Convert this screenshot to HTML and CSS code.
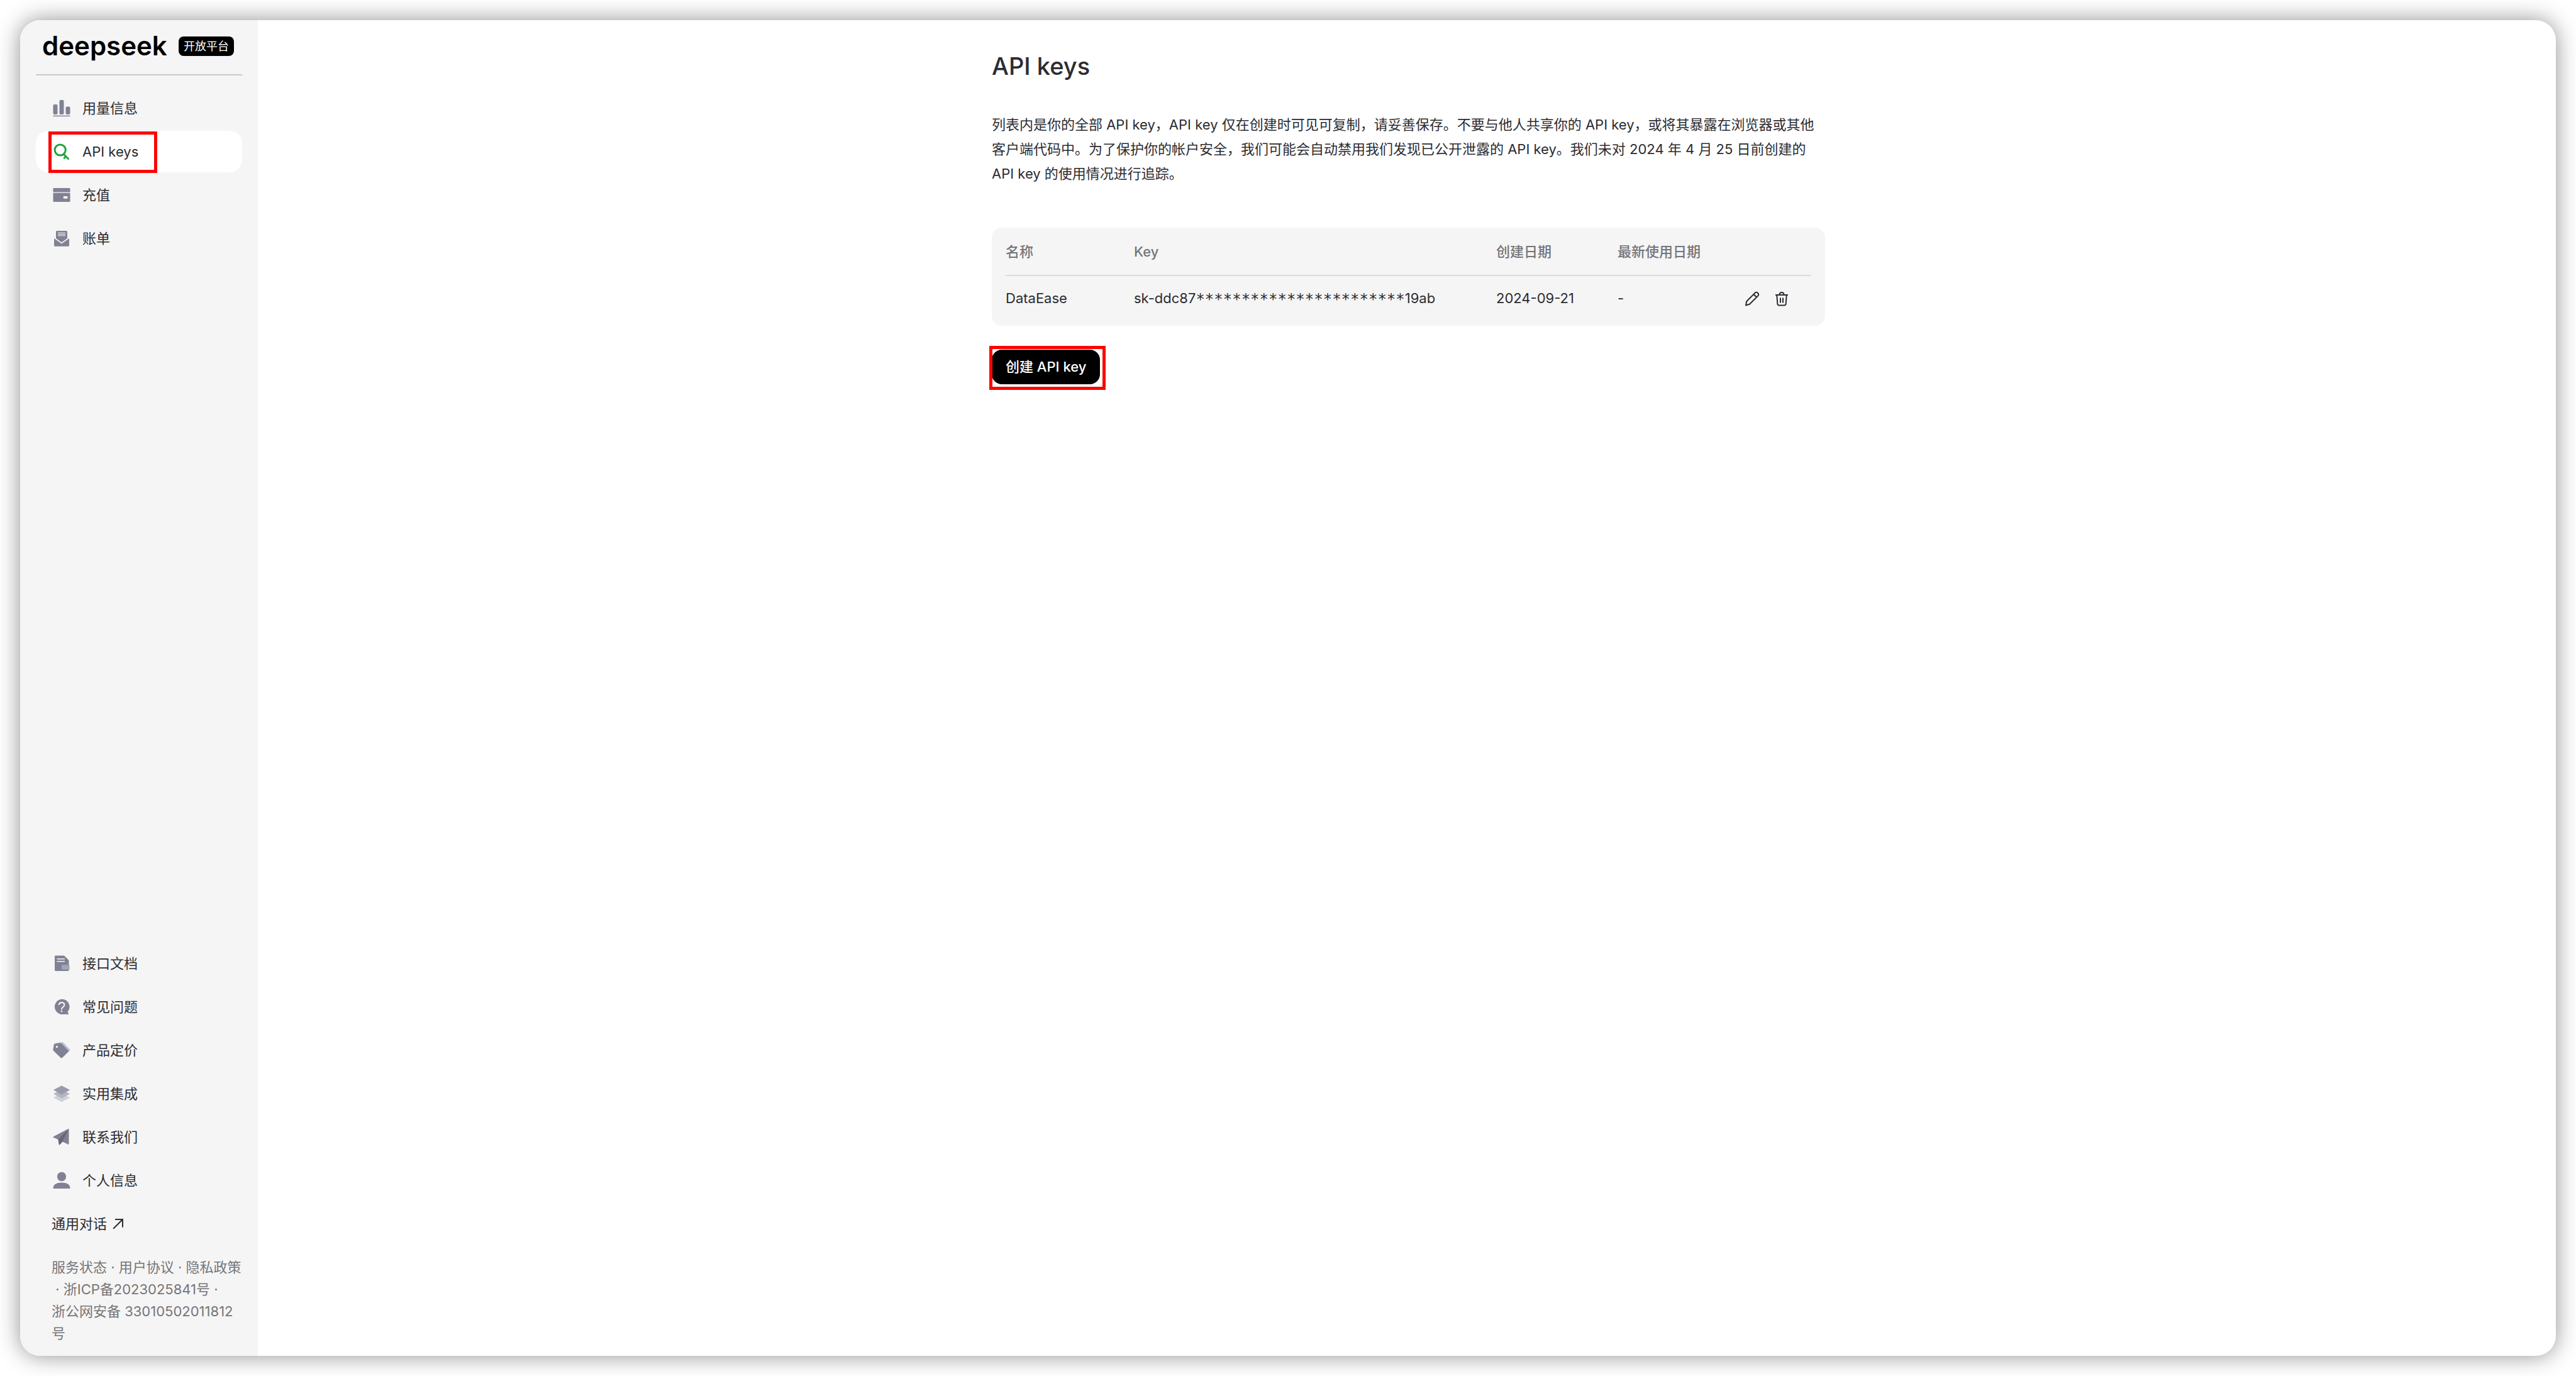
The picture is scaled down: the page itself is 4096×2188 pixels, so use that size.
FILE: index.html
```html
<!DOCTYPE html>
<html lang="zh-CN">
<head>
<meta charset="utf-8">
<title>API keys</title>
<link rel="stylesheet" href="styles.css">
</head>
<body>
<div class="window">
  <aside class="sidebar">
    <header class="brand">
      <span class="brand-name">deepseek</span>
      <span class="brand-badge">开放平台</span>
    </header>
    <nav class="nav">
      <a class="nav-item" href="#usage">
        <svg class="icon" viewBox="0 0 28 28"><rect x="0.500" y="8" width="7" height="16" rx="2"/><rect x="10.500" y="1" width="7" height="23" rx="2"/><rect x="20.500" y="11.500" width="7" height="12.500" rx="2"/><rect x="0.500" y="25.700" width="27" height="1.500"/></svg>
        用量信息
      </a>
      <a class="nav-item active" href="#keys">
        <svg class="icon key" viewBox="0 0 28 28"><circle cx="11.700" cy="11.500" r="8.600" stroke-width="3"/><path d="M17 18l7.500 7.500M20.500 22l-2.300 2.300" stroke-width="3" stroke-linecap="round"/></svg>
        API keys
        <span class="mark mark-nav"></span>
      </a>
      <a class="nav-item" href="#topup">
        <svg class="icon" viewBox="0 0 28 28"><path d="M1.500 3h25q1 0 1 1v5.500h-27V4q0-1 1-1z"/><path fill-rule="evenodd" d="M.5 10.700h27v13q0 1.200-1 1.200h-25q-1 0-1-1.200zM17.500 16q-.7 0-.7.7v2.300q0 .7.7.7h5.300q.7 0 .7-.7v-2.300q0-.7-.7-.7z"/></svg>
        充值
      </a>
      <a class="nav-item" href="#bills">
        <svg class="icon" viewBox="0 0 28 28"><path fill-rule="evenodd" d="M6.500 2h15q1.500 0 1.500 1.500V14l-9 6.500L5 14V3.500Q5 2 6.500 2zM8 4.700v1.100h12V4.700zM8 7v1.100h12V7zM8 9.200v1.100h12V9.200z"/><path d="M2 14l12 8.500L26 14v11.500q0 1.200-1.200 1.200H3.200Q2 26.700 2 25.500z"/></svg>
        账单
      </a>
    </nav>
    <nav class="nav nav-bottom">
      <a class="nav-item" href="#docs">
        <svg class="icon" viewBox="0 0 28 28"><path fill-rule="evenodd" d="M4 1.500h14l7.500 7.500v15.500q0 1.500-1.500 1.500H4.500Q3 26 3 24.500v-21.500Q3 1.500 4 1.500zM6.500 6v1.400h12.500V6zM6.500 10v1.400h12.500V10z"/><rect x="14" y="16.300" width="12.500" height="7.400" rx="1" fill="#a3a5b4"/></svg>
        接口文档
      </a>
      <a class="nav-item" href="#faq">
        <svg class="icon" viewBox="0 0 28 28"><path d="M14 1.700a12.200 12.200 0 1 0 4 24l7.300.3-1.700-4.200A12.200 12.200 0 0 0 14 1.700z"/><path d="M9.800 10.300q.7-3.300 4.300-3.300 4.300.2 4.300 3.800 0 2-2.400 3.500-2 1.300-2 3.500" fill="none" stroke="#f5f5f5" stroke-width="2" stroke-linecap="round"/><circle cx="14" cy="21" r="1.300" fill="#f5f5f5"/></svg>
        常见问题
      </a>
      <a class="nav-item" href="#pricing">
        <svg class="icon" viewBox="0 0 28 28"><path d="M5 2.500L14.500 1q1.500 0 2.500 1l10 10.500q1 1 0 2L15.500 26z" fill="#bcbfd0"/><path fill-rule="evenodd" d="M3 3.600L11.500 2.700q1.500-.1 2.500.9l10.600 11q.8.8 0 1.600L14.500 26q-1 1-2 0L1 14.700q-.7-.7-.6-1.700L1.700 5q.2-1.200 1.300-1.400zM6.500 6.700a1.700 1.700 0 1 0 .01 0z"/></svg>
        产品定价
      </a>
      <a class="nav-item" href="#integrations">
        <svg class="icon" viewBox="0 0 28 28"><path d="M14 13.500l12.500 6.500q.5.400 0 .8L14 27.200 1.500 20.800q-.5-.4 0-.8z" fill="#cfd0da"/><path d="M14 7.500L26.500 14q.5.400 0 .8L14 21.200 1.500 14.800q-.5-.4 0-.8z" fill="#b3b5c3"/><path d="M14 1.300L26.500 7.700q.5.400 0 .8L14 15.500 1.500 8.500q-.5-.4 0-.8z" fill="#9a9ba9"/></svg>
        实用集成
      </a>
      <a class="nav-item" href="#contact">
        <svg class="icon" viewBox="0 0 28 28"><path d="M24.500.9q1-.3 1 .7v23.600q0 1-1 .6L15.500 21.500 11 26.200q-1 .6-1.200-.5L8.500 18 1 14.800q-1.200-.7 0-1.500z"/><path d="M25 1.300L15 21.500l-4.200 4.800q-.8.400-1-.6L8.500 18z" fill="#666876"/></svg>
        联系我们
      </a>
      <a class="nav-item" href="#profile">
        <svg class="icon" viewBox="0 0 28 28"><rect x="7" y="0.800" width="14" height="14.400" rx="6.600"/><path d="M.5 26q.6-8.500 13.500-8.500T27.500 26q0 1-1 1h-25q-1 0-1-1z"/></svg>
        个人信息
      </a>
    </nav>
    <a class="chat-link" href="#chat">通用对话
      <svg class="arrow" viewBox="0 0 18 18"><path d="M1.200 16.800L16 2M4 2h12v12.500"/></svg>
    </a>
    <footer class="legal">
      <div class="legal-line"><a href="#status">服务状态</a> · <a href="#terms">用户协议</a> · <a href="#privacy">隐私政策</a></div>
      <div class="legal-line"> · <a href="#icp">浙ICP备2023025841号</a> · </div>
      <div class="legal-line"><a href="#police">浙公网安备 33010502011812<br>号</a></div>
    </footer>
  </aside>
  <main class="main">
    <div class="content">
      <h1 class="title">API keys</h1>
      <p class="intro">列表内是你的全部 API key，API key 仅在创建时可见可复制，请妥善保存。不要与他人共享你的 API key，或将其暴露在浏览器或其他客户端代码中。为了保护你的帐户安全，我们可能会自动禁用我们发现已公开泄露的 API key。我们未对 2024 年 4 月 25 日前创建的 API key 的使用情况进行追踪。</p>
      <div class="card">
        <table class="keys">
          <colgroup><col class="c-name"><col class="c-key"><col class="c-date"><col class="c-last"><col class="c-actions"></colgroup>
          <thead>
            <tr><th>名称</th><th>Key</th><th>创建日期</th><th>最新使用日期</th><th></th></tr>
          </thead>
          <tbody>
            <tr>
              <td>DataEase</td>
              <td>sk-ddc87<span class="masked">***********************</span>19ab</td>
              <td>2024-09-21</td>
              <td>-</td>
              <td>
                <div class="actions">
                  <button class="icon-button" type="button" aria-label="编辑"><svg class="action-icon" viewBox="0 0 24 24"><path d="M2 22.500l1.200-6.300L16.700 2.600q2-1.800 4.300.3 2.200 2.400.3 4.500L7.800 20.800zM14.500 5l4.500 4.500"/></svg></button>
                  <button class="icon-button" type="button" aria-label="删除"><svg class="action-icon" viewBox="0 0 24 24"><path d="M2 6h20M8.500 6q0-4 3.500-4t3.500 4M4.300 6l1 14q.2 2.500 2.700 2.500h8q2.500 0 2.700-2.500l1-14M10 10.500v8M14 10.500v8"/></svg></button>
                </div>
              </td>
            </tr>
          </tbody>
        </table>
      </div>
      <div class="create">
        <button class="create-button" type="button">创建 API key</button>
        <span class="mark mark-create"></span>
      </div>
    </div>
  </main>
</div>
</body>
</html>
```

FILE: styles.css
```css
* { box-sizing: border-box; }

body {
  margin: 0;
  padding: 32px;
  min-height: 100vh;
  display: flex;
  background: #fff;
  color: #2c2c31;
  font: 22px/35px Inter, "Noto Sans CJK SC", sans-serif;
}

a { color: inherit; text-decoration: none; }

.window {
  flex: 1;
  display: flex;
  border-radius: 32px;
  background: #fff;
  box-shadow: 0 0 36px rgba(0, 0, 0, 0.44);
}

.sidebar {
  width: 378px;
  flex: none;
  display: flex;
  flex-direction: column;
  padding: 22px 25px 18px;
  border-radius: 32px 0 0 32px;
  background: #f5f5f5;
}

.brand {
  display: flex;
  align-items: center;
  justify-content: space-between;
  height: 66px;
  padding: 0 13px 26px 10px;
  border-bottom: 2px solid #cacaca;
}

.brand-name {
  color: #000;
  font-size: 42px;
  font-weight: 600;
  line-height: 38px;
}

.brand-badge {
  padding: 0 8px;
  border-radius: 8px;
  background: #000;
  color: #fff;
  font-size: 18px;
  line-height: 31px;
}

.nav {
  display: flex;
  flex-direction: column;
  gap: 3px;
  padding-top: 19px;
}

.nav-bottom { margin-top: auto; padding-top: 0; }

.nav-item {
  position: relative;
  display: flex;
  align-items: center;
  gap: 19px;
  height: 66px;
  padding-left: 27px;
  border-radius: 20px;
}

.nav-item.active { background: #fff; }

.icon { width: 28px; height: 28px; fill: #808294; }
.icon.key { fill: none; stroke: #1fa43c; }

.mark { position: absolute; border: 5px solid #f00; pointer-events: none; }
.mark-nav { left: 20px; top: 1px; width: 173px; height: 66px; }
.mark-create { inset: -6px -9px -9px -4px; }

.chat-link {
  display: flex;
  align-items: center;
  gap: 9px;
  height: 66px;
  margin-top: 3px;
  padding-left: 25px;
}

.arrow { width: 18px; height: 18px; fill: none; stroke: #2c2c31; stroke-width: 2; }

.legal {
  margin-top: 19px;
  padding-left: 25px;
  color: #757579;
}

.legal-line { white-space: pre; }

.main { flex: 1; padding: 47px 0 0 5px; }

.content { width: 1325px; margin: 0 auto; }

.title {
  margin: 0;
  font-size: 38px;
  font-weight: 500;
  line-height: 52px;
}

.intro { margin: 48px 0 66px; line-height: 39px; }

.card {
  padding: 2px 22px 8px;
  border-radius: 16px;
  background: #f5f5f5;
}

.keys { width: 100%; border-collapse: collapse; table-layout: fixed; }
.keys th, .keys td { padding: 0; text-align: left; }
.keys th { height: 74px; border-bottom: 2px solid #dbdbdb; color: #757579; font-weight: 500; }
.keys td { height: 72px; }

.c-name { width: 204px; }
.c-key { width: 576px; }
.c-date { width: 193px; }
.c-last { width: 202px; }

.masked {
  font-family: "DejaVu Sans Mono", monospace;
  font-size: 24px;
  line-height: 1;
  vertical-align: middle;
}

.actions { display: flex; gap: 23px; }

.icon-button {
  display: flex;
  padding: 0;
  border: 0;
  background: none;
}

.action-icon { width: 24px; height: 24px; fill: none; stroke: #2c2c31; stroke-width: 2; stroke-linejoin: round; }

.create { position: relative; width: fit-content; margin-top: 38px; }

.create-button {
  display: block;
  height: 55px;
  padding: 0 22px;
  border: 0;
  border-radius: 16px;
  background: #000;
  color: #fff;
  font: 500 22px/35px Inter, "Noto Sans CJK SC", sans-serif;
}
```
